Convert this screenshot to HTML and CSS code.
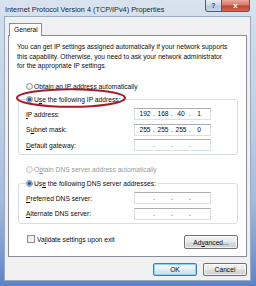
FILE: index.html
```html
<!DOCTYPE html>
<html>
<head>
<meta charset="utf-8">
<link rel="stylesheet" href="styles.css">
</head>
<body>
<div class="window">
  <div class="titlebar">
    <span class="title">Internet Protocol Version 4 (TCP/IPv4) Properties</span>
    <div class="caption-buttons">
      <span class="cap help">?</span>
      <span class="cap close">x</span>
    </div>
  </div>
  <div class="client">
    <div class="tabs"><span class="tab">General</span></div>
    <div class="panel">
      <p class="intro">You can get IP settings assigned automatically if your network supports<br>this capability. Otherwise, you need to ask your network administrator<br>for the appropriate IP settings.</p>
      <div class="section">
        <div class="radio-row"><span class="radio"></span><span>O<u>b</u>tain an IP address automatically</span></div>
        <fieldset class="group">
          <legend><span class="radio checked"></span><span>U<u>s</u>e the following IP address:</span></legend>
          <div class="fields">
            <span class="label"><u>I</u>P address:</span>
            <span class="ipbox"><span class="seg">192</span><span class="dot">.</span><span class="seg">168</span><span class="dot">.</span><span class="seg">40</span><span class="dot">.</span><span class="seg">1</span></span>
            <span class="label">S<u>u</u>bnet mask:</span>
            <span class="ipbox"><span class="seg">255</span><span class="dot">.</span><span class="seg">255</span><span class="dot">.</span><span class="seg">255</span><span class="dot">.</span><span class="seg">0</span></span>
            <span class="label"><u>D</u>efault gateway:</span>
            <span class="ipbox"><span class="seg"></span><span class="dot">.</span><span class="seg"></span><span class="dot">.</span><span class="seg"></span><span class="dot">.</span><span class="seg"></span></span>
          </div>
        </fieldset>
        <div class="radio-row dns disabled"><span class="radio"></span><span>O<u>b</u>tain DNS server address automatically</span></div>
        <fieldset class="group group-dns">
          <legend><span class="radio checked"></span><span>Us<u>e</u> the following DNS server addresses:</span></legend>
          <div class="fields">
            <span class="label"><u>P</u>referred DNS server:</span>
            <span class="ipbox"><span class="seg"></span><span class="dot">.</span><span class="seg"></span><span class="dot">.</span><span class="seg"></span><span class="dot">.</span><span class="seg"></span></span>
            <span class="label"><u>A</u>lternate DNS server:</span>
            <span class="ipbox"><span class="seg"></span><span class="dot">.</span><span class="seg"></span><span class="dot">.</span><span class="seg"></span><span class="dot">.</span><span class="seg"></span></span>
          </div>
        </fieldset>
        <div class="bottom-row">
          <div class="check-label"><span class="checkbox"></span><span>Va<u>l</u>idate settings upon exit</span></div>
          <span class="btn advanced">Ad<u>v</u>anced...</span>
        </div>
      </div>
    </div>
    <div class="dialog-buttons">
      <span class="btn default">OK</span>
      <span class="btn">Cancel</span>
    </div>
  </div>
  <svg class="annotation" width="114" height="22" viewBox="0 0 114 22">
    <ellipse cx="56" cy="10" rx="54" ry="8.8" fill="none" stroke="#a51d2b" stroke-width="2"/>
  </svg>
</div>
</body>
</html>
```
FILE: styles.css
```css
* { box-sizing: border-box; }
html, body { margin: 0; padding: 0; }
body {
  width: 256px;
  height: 286px;
  overflow: hidden;
  font-family: "Liberation Sans", Arial, sans-serif;
  font-size: 6.7px;
  color: #0c0c0c;
  background: #fff;
}
.window {
  position: relative;
  width: 256px;
  height: 286px;
  display: flex;
  flex-direction: column;
  padding: 0 5px 5px 4px;
  background: linear-gradient(180deg, #d9e3ef 0px, #cfdbea 30px, #bfcfe3 120px, #a4bbdc 200px, #7d9cd0 250px, #5b83c6 286px);
}
.titlebar {
  height: 16px;
  display: flex;
  justify-content: space-between;
  align-items: flex-start;
  flex: none;
}
.title {
  font-size: 7.3px;
  line-height: 9px;
  padding-top: 5px;
  margin-left: 1px;
  color: #1a2130;
  white-space: nowrap;
  text-shadow: 0 0 4px rgba(255,255,255,0.9);
}
.caption-buttons {
  display: flex;
  margin-right: 1px;
}
.cap {
  height: 12px;
  border: 1px solid #4d5d78;
  border-top: none;
  display: flex;
  align-items: center;
  justify-content: center;
  font-weight: bold;
  font-size: 7px;
}
.help {
  width: 17px;
  border-radius: 0 0 0 3px;
  background: linear-gradient(180deg, #e6edf6 0%, #cfdbea 45%, #b4c6de 55%, #c9d7ea 100%);
  color: #3a4658;
}
.close {
  width: 28px;
  border-left: none;
  border-radius: 0 0 3px 0;
  background: linear-gradient(180deg, #e9a898 0%, #d8796a 45%, #c2402e 55%, #d26a55 100%);
  color: #fff;
  font-size: 8px;
}
.client {
  flex: 1;
  background: #f0f0f0;
  border: 1px solid #9aaac2;
  padding: 6px 3px 0 3px;
  display: flex;
  flex-direction: column;
}
.tabs {
  display: flex;
  padding-left: 1px;
}
.tab {
  position: relative;
  z-index: 1;
  width: 33px;
  height: 13px;
  margin-bottom: -1px;
  border: 1px solid #898c95;
  border-bottom: none;
  background: #fff;
  padding-left: 4px;
  line-height: 11px;
}
.panel {
  width: 239px;
  height: 222px;
  border: 1px solid #898c95;
  background: #fff;
}
.intro {
  margin: 6px 0 0 8px;
  line-height: 9.5px;
  white-space: nowrap;
}
.section {
  padding: 0 8px 0 9px;
}
.radio-row {
  display: flex;
  align-items: center;
  height: 10px;
  margin: 10.5px 0 0 8px;
  white-space: nowrap;
}
.radio-row.dns { margin-top: 9px; }
.disabled { color: #9a9a9a; }
.radio {
  flex: none;
  width: 7px;
  height: 7px;
  margin-right: 1px;
  border-radius: 50%;
  border: 1px solid #8c8f94;
  background: radial-gradient(circle at 45% 40%, #ffffff 0, #f2f2f2 40%, #d4d4d4 100%);
}
.disabled .radio {
  border-color: #c4c6c9;
  background: #f4f4f4;
}
.radio.checked {
  background: radial-gradient(circle, #1f4f86 0, #2d6aa8 1.3px, #9ec4e2 2.3px, #eef3f8 3.3px);
}
.group {
  width: 220px;
  margin: 3px 0 0 0;
  padding: 4px 0 3px 7px;
  border: 1px solid #d5dfe5;
  border-radius: 3px;
  min-width: 0;
}
.group-dns { margin-top: 4px; }
.group legend {
  display: flex;
  align-items: center;
  height: 10px;
  padding: 0 1px 0 0;
  margin: 0;
  white-space: nowrap;
}
.fields {
  display: grid;
  grid-template-columns: 108px 77px;
  row-gap: 3.5px;
  align-items: center;
}
.label { white-space: nowrap; }
.ipbox {
  height: 12px;
  border: 1px solid #dbdfe6;
  border-top-color: #abadb3;
  background: #fff;
  display: flex;
  align-items: center;
  padding-left: 3px;
  line-height: 10px;
}
.seg { width: 14px; text-align: center; }
.dot { width: 4px; text-align: center; }
.bottom-row {
  display: flex;
  justify-content: space-between;
  align-items: flex-start;
  margin-top: 10.5px;
  padding-left: 9px;
}
.check-label {
  display: flex;
  align-items: center;
  height: 10px;
  white-space: nowrap;
}
.checkbox {
  width: 8px;
  height: 8px;
  margin-right: 2px;
  border: 1px solid #8f8f8f;
  background: linear-gradient(135deg, #dcdcdc 0%, #f4f4f4 60%, #ffffff 100%);
  box-shadow: inset 0 0 0 1px #f0f0f0;
}
.btn {
  display: flex;
  align-items: center;
  justify-content: center;
  width: 44px;
  height: 13px;
  border: 1px solid #707070;
  border-radius: 2px;
  background: linear-gradient(180deg, #f2f2f2 0%, #ebebeb 48%, #dddddd 52%, #cfcfcf 100%);
  box-shadow: inset 0 0 0 1px rgba(255,255,255,0.7);
  white-space: nowrap;
}
.advanced {
  width: 54px;
  height: 14px;
  margin-top: 1px;
}
.btn.default {
  border-color: #3c7fb1;
  box-shadow: inset 0 0 0 1px #8fd0f2;
  background: linear-gradient(180deg, #f3f9fd 0%, #e8f2f9 48%, #d9e9f4 52%, #cde2f0 100%);
}
.dialog-buttons {
  display: flex;
  justify-content: flex-end;
  gap: 6px;
  margin-top: 6px;
}
.annotation {
  position: absolute;
  left: 15px;
  top: 88px;
}
```
